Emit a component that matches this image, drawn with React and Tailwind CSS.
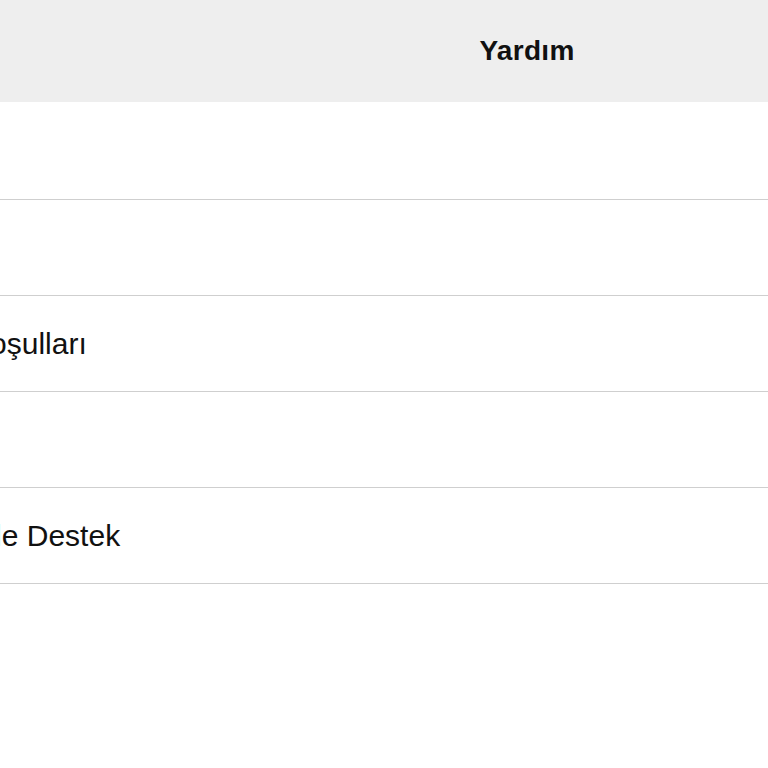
import React from 'react';

// Yardım ekranı: sayfa yatayda kaydırılmış halde görünüyor
const items = [
  { id: 1, label: 'SSS' },
  { id: 2, label: 'Hakkında' },
  { id: 3, label: 'Kullanım Koşulları' },
  { id: 4, label: 'Gizlilik' },
  { id: 5, label: 'Whatsapp ile Destek' },
];

function Header() {
  return (
    <header className="h-[102px] bg-[#eeeeee] flex items-center justify-center">
      <h1 className="text-[28px] font-bold text-[#111111] tracking-[0.3px]" style={{ fontFamily: '"Liberation Sans", Arial, sans-serif' }}>
        Yardım
      </h1>
    </header>
  );
}

function Row({ label }) {
  return (
    <div className="h-24 border-b border-[#cfcfcf] flex items-center pl-[32px]">
      <span className="text-[30px] text-[#111111] whitespace-nowrap">{label}</span>
    </div>
  );
}

export default function App() {
  return (
    <div className="w-[768px] h-[768px] overflow-hidden bg-white" style={{ fontFamily: '"Liberation Sans", Arial, sans-serif' }}>
      <div className="w-[1428px] -ml-[187px]">
        <Header />
        <div className="mt-[2px]">
          {items.map((it) => (
            <Row key={it.id} label={it.label} />
          ))}
        </div>
      </div>
    </div>
  );
}
